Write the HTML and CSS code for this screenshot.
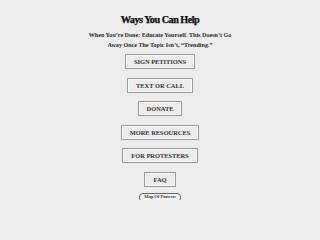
FILE: index.html
```html
<!DOCTYPE html>
<html>
<head>
<meta charset="utf-8">
<link rel="stylesheet" href="styles.css">
</head>
<body>
<main class="page">
  <h1 class="title">Ways You Can Help</h1>
  <p class="intro">When You’re Done: Educate Yourself. This Doesn’t Go<br>Away Once The Topic Isn’t, “Trending.”</p>
  <nav class="links">
    <a class="btn">SIGN PETITIONS</a>
    <a class="btn">TEXT OR CALL</a>
    <a class="btn">DONATE</a>
    <a class="btn">MORE RESOURCES</a>
    <a class="btn">FOR PROTESTERS</a>
    <a class="btn">FAQ</a>
  </nav>
  <a class="pill">Map Of Protests</a>
</main>
</body>
</html>
```
FILE: styles.css
```css
html, body {
  margin: 0;
  padding: 0;
  background: #ededed;
  height: 200px;
  overflow: hidden;
}
.page {
  display: flex;
  flex-direction: column;
  align-items: center;
  padding-top: 13px;
  font-family: "Liberation Serif", "DejaVu Serif", serif;
  color: #111;
}
.title {
  margin: 0;
  font-size: 10.2px;
  font-weight: bold;
  line-height: 14px;
  letter-spacing: -0.5px;
  color: #0a0a0a;
  -webkit-text-stroke: 0.25px #0a0a0a;
}
.intro {
  margin: 3px 0 0;
  font-size: 6.1px;
  font-weight: bold;
  line-height: 10px;
  text-align: center;
  color: #2a2a2a;
}
.links {
  display: flex;
  flex-direction: column;
  align-items: center;
  gap: 8.5px;
  margin-top: 4px;
}
.btn {
  display: block;
  box-sizing: border-box;
  height: 15px;
  line-height: 13px;
  padding: 0 8px;
  border: 1px solid #9a9a9a;
  box-shadow: inset 0 0 0 1px #fafafa;
  font-size: 6.4px;
  font-weight: bold;
  color: #333;
  text-decoration: none;
}
.pill {
  display: block;
  margin-top: 6px;
  height: 7px;
  line-height: 6px;
  padding: 0 4px;
  border: 1px solid #666;
  border-radius: 4px;
  background: #f6f6f6;
  font-size: 4.5px;
  font-weight: bold;
  color: #333;
}
```
